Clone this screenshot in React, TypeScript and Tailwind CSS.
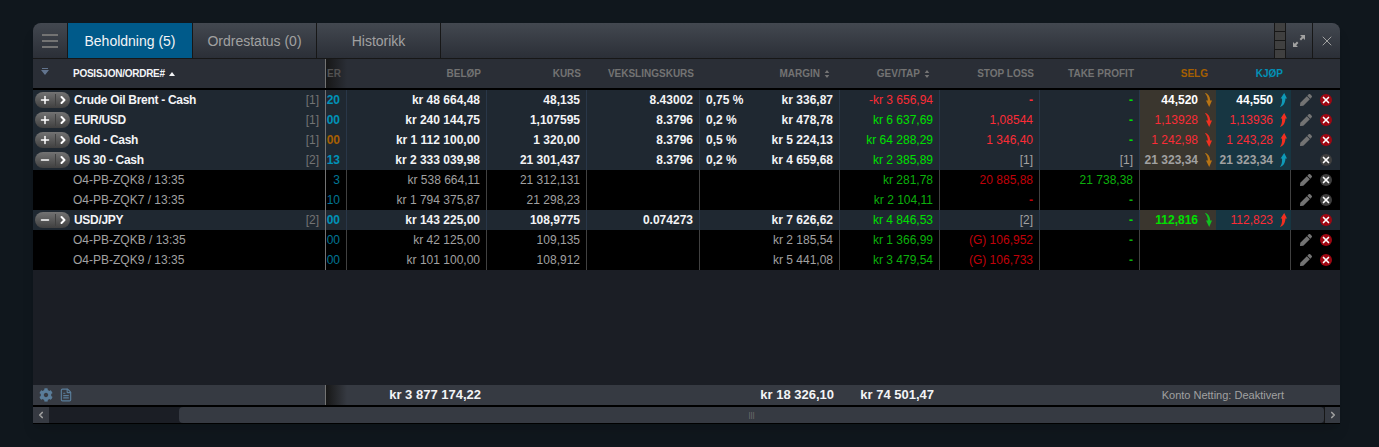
import { ChevronLeft, ChevronRight, FileText, Minus, Plus, X } from "lucide-react";
import { FaCog, FaPen } from "react-icons/fa";

const cols =
  "grid grid-cols-[293px_21px_140px_100px_113px_140px_100px_100px_100px_76px_75px_49px]";

type Row = {
  kind: "group" | "order";
  name: string;
  count?: string;
  open?: boolean;
  er: string;
  erColor: string;
  amount: string;
  rate: string;
  fx?: string;
  pct?: string;
  margin?: string;
  pl: string;
  stop: string;
  stopMuted?: boolean;
  take: string;
  takeMuted?: boolean;
  sell?: string;
  buy?: string;
  sellColor?: string;
  buyColor?: string;
  sellArrow?: string;
  buyArrow?: string;
  edit?: boolean;
  close?: "red" | "gray";
  plNeg?: boolean;
};

const rows: Row[] = [
  { kind: "group", name: "Crude Oil Brent - Cash", count: "[1]", er: "20", erColor: "text-cyan-600", amount: "kr 48 664,48", rate: "48,135", fx: "8.43002", pct: "0,75 %", margin: "kr 336,87", pl: "-kr 3 656,94", plNeg: true, stop: "-", take: "-", sell: "44,520", buy: "44,550", sellColor: "font-bold text-white", buyColor: "font-bold text-white", sellArrow: "#b87414", buyArrow: "#0e9ab8", edit: true, close: "red" },
  { kind: "group", name: "EUR/USD", count: "[1]", er: "00", erColor: "text-cyan-600", amount: "kr 240 144,75", rate: "1,107595", fx: "8.3796", pct: "0,2 %", margin: "kr 478,78", pl: "kr 6 637,69", stop: "1,08544", take: "-", sell: "1,13928", buy: "1,13936", sellColor: "text-red-500", buyColor: "text-red-500", sellArrow: "#f03020", buyArrow: "#f03020", edit: true, close: "red" },
  { kind: "group", name: "Gold - Cash", count: "[1]", er: "00", erColor: "text-yellow-700", amount: "kr 1 112 100,00", rate: "1 320,00", fx: "8.3796", pct: "0,5 %", margin: "kr 5 224,13", pl: "kr 64 288,29", stop: "1 346,40", take: "-", sell: "1 242,98", buy: "1 243,28", sellColor: "text-red-500", buyColor: "text-red-500", sellArrow: "#f03020", buyArrow: "#f03020", edit: true, close: "red" },
  { kind: "group", name: "US 30 - Cash", count: "[2]", open: true, er: "13", erColor: "text-cyan-600", amount: "kr 2 333 039,98", rate: "21 301,437", fx: "8.3796", pct: "0,2 %", margin: "kr 4 659,68", pl: "kr 2 385,89", stop: "[1]", stopMuted: true, take: "[1]", takeMuted: true, sell: "21 323,34", buy: "21 323,34", sellColor: "font-bold text-neutral-400", buyColor: "font-bold text-neutral-400", sellArrow: "#b87414", buyArrow: "#0e9ab8", close: "gray" },
  { kind: "order", name: "O4-PB-ZQK8 / 13:35", er: "3", erColor: "text-cyan-700", amount: "kr 538 664,11", rate: "21 312,131", pl: "kr 281,78", stop: "20 885,88", take: "21 738,38", edit: true, close: "gray" },
  { kind: "order", name: "O4-PB-ZQK7 / 13:35", er: "10", erColor: "text-cyan-700", amount: "kr 1 794 375,87", rate: "21 298,23", pl: "kr 2 104,11", stop: "-", take: "-", edit: true, close: "gray" },
  { kind: "group", name: "USD/JPY", count: "[2]", open: true, er: "00", erColor: "text-cyan-600", amount: "kr 143 225,00", rate: "108,9775", fx: "0.074273", margin: "kr 7 626,62", pl: "kr 4 846,53", stop: "[2]", stopMuted: true, take: "-", sell: "112,816", buy: "112,823", sellColor: "font-bold text-[#00e000]", buyColor: "text-red-500", sellArrow: "#10c020", buyArrow: "#f03020", close: "red" },
  { kind: "order", name: "O4-PB-ZQKB / 13:35", er: "00", erColor: "text-cyan-700", amount: "kr 42 125,00", rate: "109,135", margin: "kr 2 185,54", pl: "kr 1 366,99", stop: "(G) 106,952", take: "-", edit: true, close: "red" },
  { kind: "order", name: "O4-PB-ZQK9 / 13:35", er: "00", erColor: "text-cyan-700", amount: "kr 101 100,00", rate: "108,912", margin: "kr 5 441,08", pl: "kr 3 479,54", stop: "(G) 106,733", take: "-", edit: true, close: "red" },
];

function SortCaret() {
  return (
    <svg viewBox="0 0 6 9" className="ml-1 h-2 w-1.5 fill-neutral-500">
      <path d="M3 0l2.6 3.4H.4zM3 9L.4 5.6h5.2z" />
    </svg>
  );
}

function TickArrow({ color, up }: { color: string; up?: boolean }) {
  return (
    <svg
      viewBox="0 0 10 13"
      preserveAspectRatio="none"
      className="ml-1.5 h-3.5 w-2 shrink-0"
      style={{ fill: color }}
    >
      {up ? (
        <path d="M6.500 0L10 5H8C8 8.500 6 12 1 13c2.500-2 3-5 2.800-8H2z" />
      ) : (
        <path d="M1 0c4.500.5 6.500 3.500 6.800 7H10l-3.500 6L2.500 7h2.300C4.800 4.500 3.500 2 1 0z" />
      )}
    </svg>
  );
}

function CloseDot({ tone }: { tone: "red" | "gray" }) {
  return (
    <span
      className={`flex h-3 w-3 items-center justify-center rounded-full ${
        tone === "red" ? "bg-red-800" : "bg-neutral-700"
      }`}
    >
      <X className="h-2.5 w-2.5 text-white" strokeWidth={4} />
    </span>
  );
}

function ExpandPill({ open }: { open?: boolean }) {
  return (
    <div className="flex h-4 w-[35px] shrink-0 items-center rounded-full bg-gradient-to-b from-neutral-500 to-neutral-700 text-white">
      <span className="flex flex-1 items-center justify-center border-r border-neutral-700">
        {open ? (
          <Minus className="h-3 w-3" strokeWidth={3} />
        ) : (
          <Plus className="h-3 w-3" strokeWidth={3} />
        )}
      </span>
      <span className="flex w-3.5 items-center justify-center">
        <ChevronRight className="h-3 w-3" strokeWidth={4} />
      </span>
    </div>
  );
}

function DataRow({ row }: { row: Row }) {
  const group = row.kind === "group";
  const line = group ? "border-r border-slate-700/60" : "border-r border-neutral-700";
  const text = group ? "font-bold text-gray-100" : "text-neutral-400";
  const cell = `flex items-center justify-end pr-1.5 ${line}`;
  const green = group ? "text-[#00e000]" : "text-[#0cb00c]";
  const dash = (v: string) => (v === "-" ? "font-bold" : "");
  return (
    <div className={`${cols} h-5 text-xs ${group ? "bg-[#1f2831]" : "bg-black"}`}>
      <div className="flex items-center border-r border-neutral-500 pl-0.5 pr-1.5">
        {group ? (
          <>
            <ExpandPill open={row.open} />
            <span className="ml-1 flex-1 font-bold tracking-tight text-gray-100">{row.name}</span>
            <span className="text-neutral-500">{row.count}</span>
          </>
        ) : (
          <span className="pl-9.5 text-neutral-400">{row.name}</span>
        )}
      </div>
      <div className={`flex items-center justify-end overflow-hidden pr-1.5 ${line} ${row.erColor} ${group ? "font-bold" : ""}`}>
        {row.er}
      </div>
      <div className={`${cell} ${text}`}>{row.amount}</div>
      <div className={`${cell} ${text}`}>{row.rate}</div>
      <div className={`${cell} ${text}`}>{row.fx}</div>
      <div className={`flex items-center justify-between pl-1.5 pr-1.5 ${line} ${text}`}>
        <span>{row.pct}</span>
        <span>{row.margin}</span>
      </div>
      <div className={`${cell} ${row.plNeg ? "text-red-500" : green}`}>{row.pl}</div>
      <div
        className={`${cell} ${dash(row.stop)} ${
          row.stopMuted ? "text-neutral-400" : group ? "text-red-500" : "text-red-700"
        }`}
      >
        {row.stop}
      </div>
      <div className={`${cell} ${dash(row.take)} ${row.takeMuted ? "text-neutral-400" : green}`}>
        {row.take}
      </div>
      <div className={`flex items-center justify-end pr-1 ${group ? "bg-[#3a362e]" : ""}`}>
        {row.sell && (
          <>
            <span className={row.sellColor}>{row.sell}</span>
            <TickArrow color={row.sellArrow ?? ""} />
          </>
        )}
      </div>
      <div className={`flex items-center justify-end pr-1 ${group ? "bg-[#173642]" : line}`}>
        {row.buy && (
          <>
            <span className={row.buyColor}>{row.buy}</span>
            <TickArrow color={row.buyArrow ?? ""} up />
          </>
        )}
      </div>
      <div className="flex items-center justify-end gap-2 pr-2">
        {row.edit && <FaPen className="h-3 w-3 text-neutral-500" />}
        {row.close && <CloseDot tone={row.close} />}
      </div>
    </div>
  );
}

function HeadCell({ label, color, sort, inset }: { label: string; color?: string; sort?: boolean; inset?: boolean }) {
  return (
    <div
      className={`flex items-center justify-end text-[10px] font-bold ${sort ? "pr-2.5" : inset ? "pr-2" : "pr-1.5"} ${color ?? "text-neutral-500"}`}
    >
      {label}
      {sort && <SortCaret />}
    </div>
  );
}

export default function App() {
  return (
    <div className="h-[447px] w-[1379px] overflow-hidden bg-[#10171d] pl-[33px] pt-[23px] font-['Liberation_Sans',Arial,sans-serif] antialiased">
      <div className="flex h-[401px] w-[1307px] flex-col overflow-hidden rounded-t-lg bg-[#1b1e25] shadow-lg">
        {/* Tabs */}
        <div className="flex h-9 shrink-0 border-b border-neutral-900 bg-gradient-to-b from-[#434850] to-[#2b2f37] text-sm">
          <button className="flex w-[35px] flex-col items-center justify-center gap-1 border-r border-neutral-900">
            <span className="h-0.5 w-4 bg-neutral-500" />
            <span className="h-0.5 w-4 bg-neutral-500" />
            <span className="h-0.5 w-4 bg-neutral-500" />
          </button>
          <div className="flex w-[124px] items-center justify-center bg-[#005a8a] font-medium text-gray-100">
            Beholdning (5)
          </div>
          <div className="flex w-[125px] items-center justify-center border-l border-r border-neutral-900 text-neutral-400">
            Ordrestatus (0)
          </div>
          <div className="flex w-[124px] items-center justify-center border-r border-neutral-900 text-neutral-400">
            Historikk
          </div>
          <div className="flex-1" />
          <div className="flex w-3 flex-col gap-px border-x border-neutral-900 bg-neutral-900">
            <span className="flex-1 bg-neutral-700" />
            <span className="flex-1 bg-neutral-700" />
            <span className="flex-1 bg-neutral-700" />
            <span className="flex-1 bg-neutral-700" />
          </div>
          <div className="flex w-[27px] items-center justify-center border-r border-neutral-900">
            <svg viewBox="0 0 14 14" className="h-3.5 w-3.5 fill-neutral-400">
              <path d="M8 1h5v5l-1.800-1.800-2.200 2.200-1.400-1.400 2.200-2.200zM1 13V8l1.800 1.800 2.200-2.200 1.400 1.400-2.200 2.200L6 13z" />
            </svg>
          </div>
          <div className="flex w-[27px] items-center justify-center text-neutral-400">
            <X className="h-4 w-4" strokeWidth={1.5} />
          </div>
        </div>

        {/* Column headers */}
        <div className={`${cols} h-[31px] shrink-0 border-b-2 border-black bg-[#2a2e36]`}>
          <div className="flex items-center border-r border-neutral-500 text-[10px] font-bold tracking-tight text-gray-100">
            <svg viewBox="0 0 8 8" className="mb-1 ml-2 h-2 w-2 fill-slate-500">
              <path d="M1 0h6v1H1zM0 2h8L4 7z" />
            </svg>
            <span className="ml-6">POSISJON/ORDRE#</span>
            <svg viewBox="0 0 6 4" className="ml-1 h-1 w-1.5 fill-gray-100">
              <path d="M3 0l3 4H0z" />
            </svg>
          </div>
          <div className="flex items-center justify-end overflow-hidden bg-gradient-to-r from-neutral-900 to-transparent pr-1.5 text-[10px] font-bold text-neutral-600">
            ER
          </div>
          <HeadCell label="BELØP" />
          <HeadCell label="KURS" />
          <HeadCell label="VEKSLINGSKURS" />
          <HeadCell label="MARGIN" sort />
          <HeadCell label="GEV/TAP" sort />
          <HeadCell label="STOP LOSS" />
          <HeadCell label="TAKE PROFIT" />
          <HeadCell label="SELG" color="text-yellow-700" inset />
          <HeadCell label="KJØP" color="text-cyan-600" inset />
          <div />
        </div>

        {/* Positions */}
        <div className="flex-1">
          {rows.map((row) => (
            <DataRow key={row.name} row={row} />
          ))}
        </div>

        {/* Totals */}
        <div className={`${cols} h-[22px] shrink-0 border-b-2 border-black bg-[#363a42] text-[13px] font-bold text-gray-100`}>
          <div className="flex items-center gap-1.5 border-r border-neutral-500 pl-1.5 text-[#5a7d9a]">
            <FaCog className="h-3.5 w-3.5" />
            <FileText className="h-3.5 w-3.5" />
          </div>
          <div className="bg-gradient-to-r from-neutral-900 to-transparent" />
          <div className="flex items-center justify-end pr-1.5">kr 3 877 174,22</div>
          <div className="col-span-3 flex items-center justify-end pr-1.5">kr 18 326,10</div>
          <div className="flex items-center justify-end pr-1.5">kr 74 501,47</div>
          <div className="col-span-5 flex items-center justify-end pr-14 text-[11px] font-normal text-neutral-400">
            Konto Netting: Deaktivert
          </div>
        </div>

        {/* Horizontal scrollbar */}
        <div className="flex h-[17px] shrink-0 border-b border-black bg-[#1b1e25]">
          <div className="flex w-4 items-center justify-center bg-[#363a42] text-neutral-400">
            <ChevronLeft className="h-2.5 w-2.5" strokeWidth={4} />
          </div>
          <div className="w-[130px]" />
          <div className="flex flex-1 items-center justify-center rounded-sm bg-[#363a42]">
            <span className="text-[8px] leading-none text-neutral-500">|||</span>
          </div>
          <div className="flex w-4 items-center justify-center border-l border-neutral-900 bg-[#363a42] text-neutral-400">
            <ChevronRight className="h-2.5 w-2.5" strokeWidth={4} />
          </div>
        </div>
      </div>
    </div>
  );
}
